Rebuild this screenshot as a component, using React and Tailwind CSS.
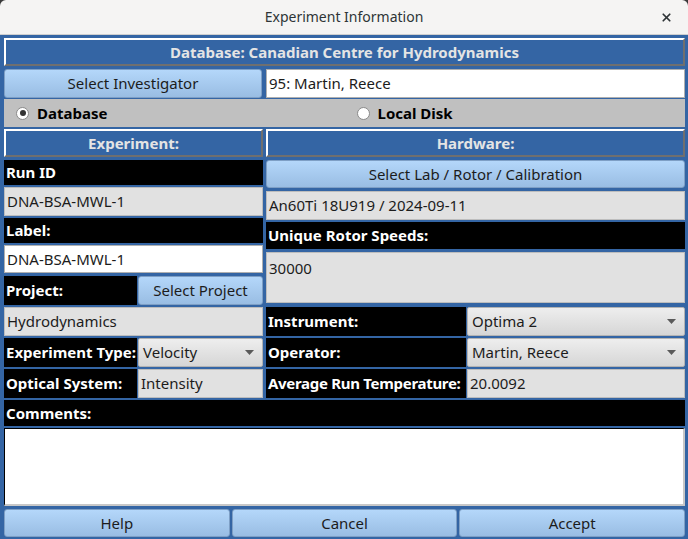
import { X } from "lucide-react";

const btn =
  "flex items-center justify-center rounded-[3px] border border-[#7e9fc5] bg-linear-to-b from-[#b4d7fa] to-[#99bde3] text-[#1c1c1c]";
const blackLabel = "flex items-center whitespace-nowrap bg-black pl-[2px] font-bold text-white";
const grayField = "flex items-center border border-[#bdbdbd] bg-[#e1e1e1] pl-[2px] text-[#1c1c1c]";
const whiteField = "flex items-center border border-[#b0b0b0] bg-white pl-[2px] text-[#1c1c1c]";
const header =
  "flex items-center justify-center border-t-2 border-l-2 border-r-2 border-b-2 border-t-white border-l-white border-r-[#6f6f6f] border-b-[#6f6f6f] bg-[#3465a4] font-bold text-[#e4e4e4]";

function Combo({ value, className }) {
  return (
    <div
      className={`flex items-center justify-between rounded-[2px] border border-[#b3b3b3] bg-linear-to-b from-[#eeeeee] to-[#d6d6d6] pl-[4px] pr-[8px] text-[#1c1c1c] ${className}`}
    >
      <span>{value}</span>
      <svg width="9" height="5" viewBox="0 0 9 5">
        <polygon points="0,0 9,0 4.5,5" fill="#5a5a5a" />
      </svg>
    </div>
  );
}

function Radio({ checked, label }) {
  return (
    <div className="flex flex-1 items-center gap-[8px] pl-[12px]">
      <span className="flex h-[13px] w-[13px] items-center justify-center rounded-full border border-[#8a8a8a] bg-white">
        {checked && <span className="h-[6px] w-[6px] rounded-full bg-[#333333]" />}
      </span>
      <span className="font-bold text-black">{label}</span>
    </div>
  );
}

export default function App() {
  return (
    <div className="flex h-[539px] w-[688px] flex-col overflow-hidden bg-[#3a3a3a] font-['Noto_Sans',sans-serif] text-[15px] leading-none">
      {/* title bar */}
      <div className="relative flex h-[35px] shrink-0 items-center justify-center rounded-t-[6px] border-b border-[#cfcfcf] bg-[#f5f4f3]">
        <span className="text-[14px] text-[#2e3436]">Experiment Information</span>
        <X size={13} strokeWidth={3.2} className="absolute right-[15px] top-[11px] text-[#2e3436]" />
      </div>

      <div className="flex flex-1 flex-col bg-[#3465a4] pl-[4px] pr-[3px] pt-[3px]">
        <div className={`${header} h-[28px]`}>Database: Canadian Centre for Hydrodynamics</div>

        <div className="mt-[3px] flex h-[29px] gap-[4px]">
          <div className={`${btn} w-[258px]`}>Select Investigator</div>
          <div className={`${whiteField} flex-1`}>95: Martin, Reece</div>
        </div>

        <div className="mt-[1px] flex h-[28px] bg-[#c0c0c0]">
          <Radio checked label="Database" />
          <Radio label="Local Disk" />
        </div>

        <div className="mt-[2px] flex gap-[3px]">
          {/* Experiment column */}
          <div className="flex w-[259px] flex-col">
            <div className={`${header} h-[28px]`}>Experiment:</div>
            <div className={`${blackLabel} mt-[3px] h-[25px]`}>Run ID</div>
            <div className={`${grayField} mt-[2px] h-[29px]`}>DNA-BSA-MWL-1</div>
            <div className={`${blackLabel} mt-[2px] h-[25px]`}>Label:</div>
            <div className={`${whiteField} mt-[2px] h-[28px]`}>DNA-BSA-MWL-1</div>
            <div className="mt-[3px] flex h-[29px] gap-[1px]">
              <div className={`${blackLabel} w-[133px]`}>Project:</div>
              <div className={`${btn} flex-1`}>Select Project</div>
            </div>
            <div className={`${grayField} mt-[2px] h-[29px]`}>Hydrodynamics</div>
            <div className="mt-[2px] flex h-[29px] gap-[1px]">
              <div className={`${blackLabel} w-[133px]`}>Experiment Type:</div>
              <Combo value="Velocity" className="flex-1" />
            </div>
            <div className="mt-[2px] flex h-[29px] gap-[1px]">
              <div className={`${blackLabel} w-[133px]`}>Optical System:</div>
              <div className={`${grayField} flex-1`}>Intensity</div>
            </div>
          </div>

          {/* Hardware column */}
          <div className="flex flex-1 flex-col">
            <div className={`${header} h-[28px]`}>Hardware:</div>
            <div className={`${btn} mt-[3px] h-[28px]`}>Select Lab / Rotor / Calibration</div>
            <div className={`${grayField} mt-[3px] h-[29px]`}>An60Ti 18U919 / 2024-09-11</div>
            <div className={`${blackLabel} mt-[2px] h-[27px]`}>Unique Rotor Speeds:</div>
            <div className={`${grayField} mt-[3px] h-[51px] items-start pt-[8px]`}>30000</div>
            <div className="mt-[4px] flex h-[29px] gap-[1px]">
              <div className={`${blackLabel} w-[200px]`}>Instrument:</div>
              <Combo value="Optima 2" className="flex-1" />
            </div>
            <div className="mt-[2px] flex h-[29px] gap-[1px]">
              <div className={`${blackLabel} w-[200px]`}>Operator:</div>
              <Combo value="Martin, Reece" className="flex-1" />
            </div>
            <div className="mt-[2px] flex h-[29px] gap-[1px]">
              <div className={`${blackLabel} w-[200px] overflow-hidden tracking-[-0.3px]`}>Average Run Temperature:</div>
              <div className={`${grayField} flex-1`}>20.0092</div>
            </div>
          </div>
        </div>

        <div className={`${blackLabel} mt-[2px] h-[26px]`}>Comments:</div>
        <div className="mt-[2px] h-[78px] border-t border-l border-b-2 border-r-2 border-t-black border-l-black border-b-[#c8c8c8] border-r-[#c8c8c8] bg-white" />

        <div className="mt-[3px] flex h-[28px] gap-[2px]">
          <div className={`${btn} flex-1`}>Help</div>
          <div className={`${btn} flex-1`}>Cancel</div>
          <div className={`${btn} flex-1`}>Accept</div>
        </div>
      </div>
    </div>
  );
}
